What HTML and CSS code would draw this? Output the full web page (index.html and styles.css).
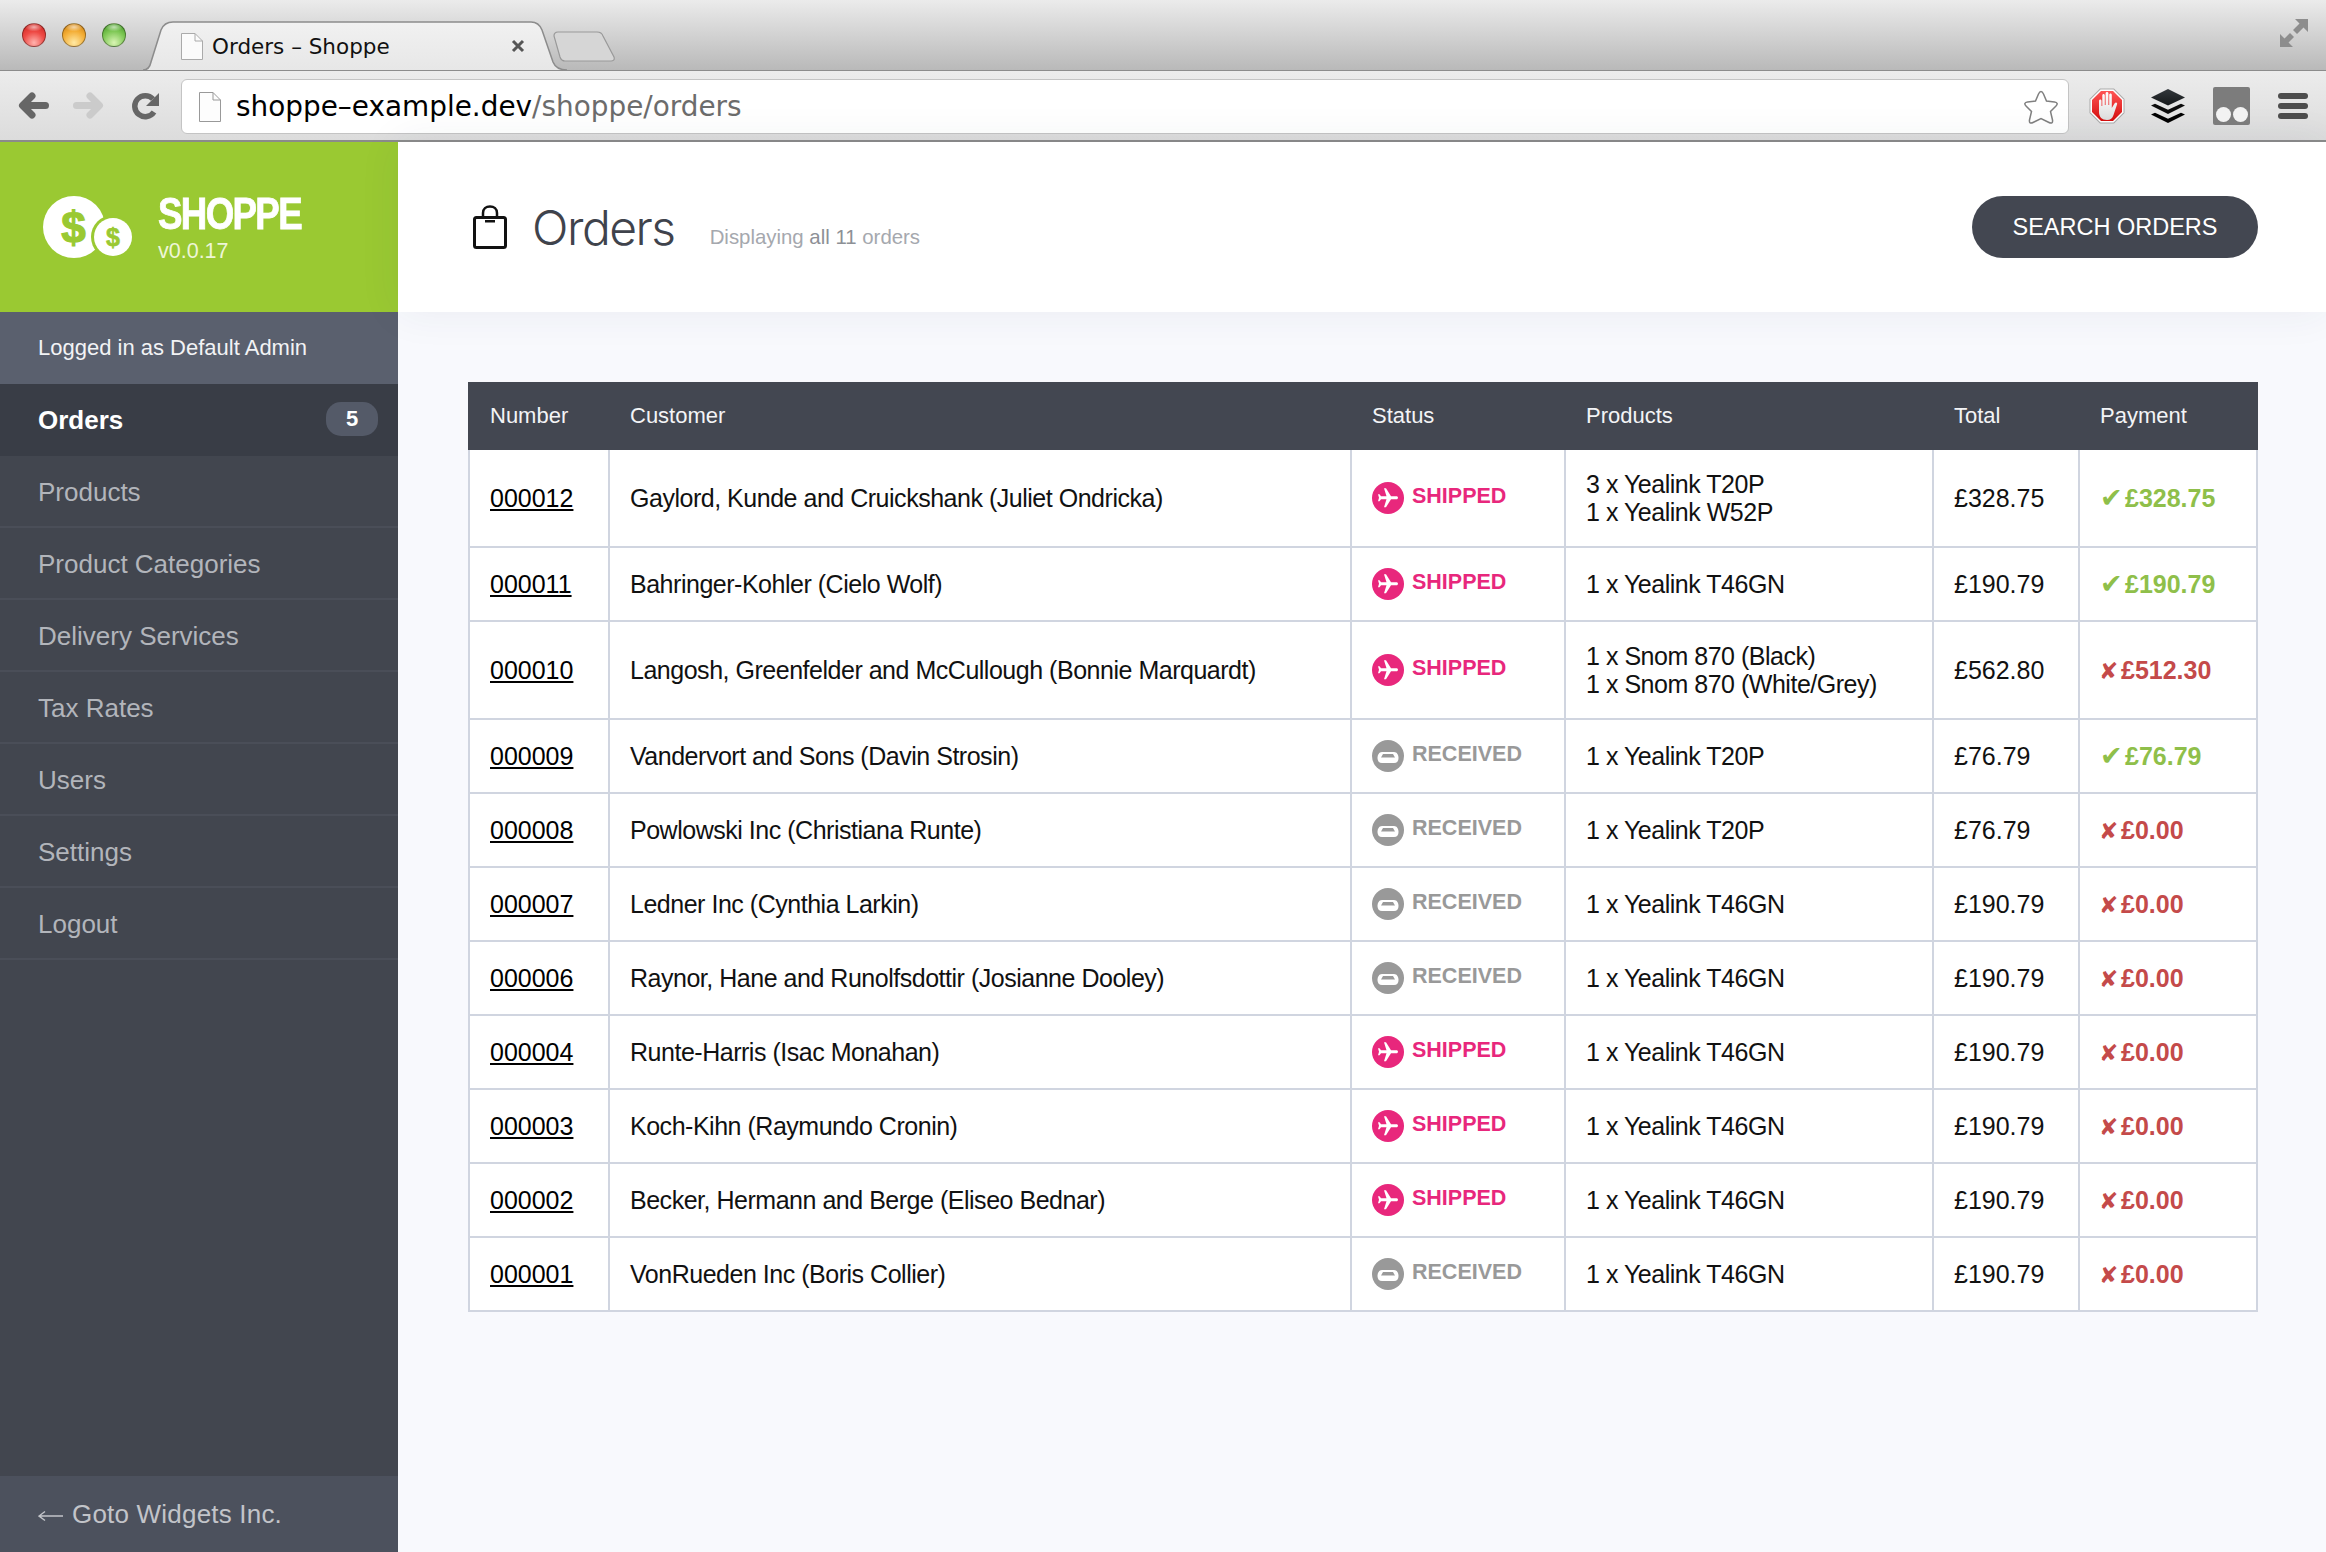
FILE: index.html
```html
<!DOCTYPE html>
<html lang="en">
<head>
    <meta charset="UTF-8">
    <title>Orders - Shoppe</title>
    <link rel="stylesheet" href="styles.css">
</head>
<body>
    <div class="browser">
        <div class="tabstrip">
            <div class="lights">
                <span class="light light-red"></span>
                <span class="light light-amber"></span>
                <span class="light light-green"></span>
            </div>
            <div class="tab">
                <svg class="tab-shape" viewBox="0 0 424 50">
                    <defs>
                        <linearGradient id="tabFill" x1="0" y1="0" x2="0" y2="1">
                            <stop offset="0" stop-color="#f1f1f1"/>
                            <stop offset="1" stop-color="#e7e7e7"/>
                        </linearGradient>
                    </defs>
                    <path d="M0 49C5 49 7 46 8 41L18 9C20 4 23 1 30 1L388 1C394 1 397 4 399 9L410 41C412 46 416 49 424 49" fill="url(#tabFill)" stroke="#8c8c8c" stroke-width="1.5"/>
                </svg>
                <svg class="tab-doc" viewBox="0 0 22 27">
                    <path d="M.5.5H14L21.5 8V26.5H.5Z" fill="#fbfbfb" stroke="#aaa"/>
                    <path d="M14 .5V8H21.5" fill="none" stroke="#aaa"/>
                </svg>
                <span class="tab-title">Orders – Shoppe</span>
                <svg class="tab-close" viewBox="0 0 14 14">
                    <path d="M2 2L12 12M12 2L2 12" stroke="#555" stroke-width="3"/>
                </svg>
            </div>
            <svg class="new-tab" viewBox="0 0 62 31">
                <path d="M1 5C1 2 3 1 5 1H44C47 1 49 2 50 5L61 26C62 29 60 30 58 30H12C9 30 8 29 7 26Z" fill="#d6d6d6" stroke="#999" stroke-width="1.2"/>
            </svg>
            <svg class="fullscreen" viewBox="0 0 28 28">
                <path d="M28 0V13L23.500 8.500L17 15L13 11L19.500 4.500L15 0Z" fill="#8d8d8d"/>
                <path d="M0 28V15L4.500 19.500L10 14L14 18L8.500 23.500L13 28Z" fill="#8d8d8d"/>
            </svg>
        </div>
        <div class="toolbar">
            <svg class="nav-back" viewBox="0 0 31 27"><path d="M27.500 13.500H5M14 4L4.500 13.500L14 23" fill="none" stroke="#666" stroke-width="7" stroke-linecap="round" stroke-linejoin="round"/></svg>
            <svg class="nav-forward" viewBox="0 0 31 27"><path d="M3.500 13.500H26M17 4L26.500 13.500L17 23" fill="none" stroke="#cbcbcb" stroke-width="7" stroke-linecap="round" stroke-linejoin="round"/></svg>
            <svg class="nav-reload" viewBox="0 0 28 28">
                <path d="M22 20A10.500 10.500 0 1 1 21 7" fill="none" stroke="#666" stroke-width="5.500"/>
                <path d="M27 1V14H14Z" fill="#666"/>
            </svg>
            <div class="address">
                <svg class="address-doc" viewBox="0 0 22 30">
                    <path d="M.5.5H14L21.500 8V29.500H.5Z" fill="#fdfdfd" stroke="#999"/>
                    <path d="M14 .5V8H21.500" fill="none" stroke="#999"/>
                </svg>
                <span class="address-text">shoppe–example.dev<span class="address-path">/shoppe/orders</span></span>
                <svg class="address-star" viewBox="0 0 36 36">
                    <path d="M18 2.500C19 2.500 19.800 3.500 20.500 5L23.500 12L31.500 13C34.500 13.400 35 15 33 17L27.500 22.500L29.500 31C30 33.800 28.500 34.800 26 33.500L18 29.500L10 33.500C7.500 34.800 6 33.800 6.500 31L8.500 22.500L3 17C1 15 1.500 13.400 4.500 13L12.500 12L15.500 5C16.200 3.500 17 2.500 18 2.500Z" fill="#fff" stroke="#808080" stroke-width="1.500"/>
                </svg>
            </div>
            <svg class="ext-stop" viewBox="0 0 36 36">
                <defs>
                    <linearGradient id="stopRed" x1="0" y1="0" x2="0" y2="1">
                        <stop offset="0" stop-color="#f55"/>
                        <stop offset="1" stop-color="#d40d0d"/>
                    </linearGradient>
                    <linearGradient id="stopHand" x1="0" y1="0" x2="0" y2="1">
                        <stop offset="0" stop-color="#fff"/>
                        <stop offset="1" stop-color="#ddd"/>
                    </linearGradient>
                </defs>
                <path d="M11 .5H25L35.500 11V25L25 35.500H11L.5 25V11Z" fill="#aaa"/>
                <path d="M11.500 1.500H24.500L34.500 11.500V24.500L24.500 34.500H11.500L1.500 24.500V11.500Z" fill="#fff"/>
                <path d="M12 3H24L33 12V24L24 33H12L3 24V12Z" fill="url(#stopRed)"/>
                <path d="M10 13C10 11 12.500 11 12.500 13V18H13.300V7.500C13.300 5.500 15.800 5.500 15.800 7.500V17H16.600V5.500C16.600 3.500 19.400 3.500 19.400 5.500V17H20.200V7C20.200 5 22.800 5 22.800 7V20L25.500 15.500C26.800 13.500 28.800 14.800 28 16.500L24.500 27C23.500 30.500 21.500 32 18 32C13 32 10 29 10 24Z" fill="url(#stopHand)"/>
            </svg>
            <svg class="ext-layers" viewBox="0 0 34 34">
                <defs>
                    <linearGradient id="layerTop" x1="0" y1="0" x2="0" y2="1">
                        <stop offset="0" stop-color="#33383c"/>
                        <stop offset="1" stop-color="#15181a"/>
                    </linearGradient>
                </defs>
                <path d="M17 0L34 8.500L17 16.500L0 8.500Z" fill="url(#layerTop)"/>
                <path d="M0 16.500L4 14.700L17 20.800L30 14.700L34 16.500L17 25Z" fill="#0c0c0c"/>
                <path d="M0 25.500L4 23.700L17 29.800L30 23.700L34 25.500L17 34Z" fill="#000"/>
            </svg>
            <div class="ext-box">
                <span class="ext-box-dot"></span>
                <span class="ext-box-dot"></span>
            </div>
            <div class="ext-menu">
                <span class="ext-menu-bar"></span>
                <span class="ext-menu-bar"></span>
                <span class="ext-menu-bar"></span>
            </div>
        </div>
    </div>

    <div class="app">
        <aside class="sidebar">
            <div class="brand">
                <svg class="brand-logo" viewBox="0 0 92 62">
                    <circle cx="31" cy="31" r="31" fill="#fff"/>
                    <circle cx="70" cy="41" r="22" fill="#9ac932"/>
                    <circle cx="70" cy="41" r="19" fill="#fff"/>
                    <text class="logo-dollar-big" x="30.500" y="47" text-anchor="middle">$</text>
                    <text class="logo-dollar-small" x="70" y="50" text-anchor="middle">$</text>
                </svg>
                <div class="brand-text">
                    <div class="brand-name">SHOPPE</div>
                    <div class="brand-version">v0.0.17</div>
                </div>
            </div>
            <div class="logged-in">Logged in as Default Admin</div>
            <nav class="nav">
                <a class="nav-item nav-item-active">Orders <span class="nav-badge">5</span></a>
                <a class="nav-item">Products</a>
                <a class="nav-item">Product Categories</a>
                <a class="nav-item">Delivery Services</a>
                <a class="nav-item">Tax Rates</a>
                <a class="nav-item">Users</a>
                <a class="nav-item">Settings</a>
                <a class="nav-item">Logout</a>
            </nav>
            <div class="goto">
                <svg class="goto-arrow" viewBox="0 0 25 12"><path d="M25 6H2M7 1.500L1 6L7 10.500" fill="none" stroke="#c2c4c9" stroke-width="1.400"/></svg>
                Goto Widgets Inc.
            </div>
        </aside>

        <main class="main">
            <header class="page-head">
                <svg class="bag-icon" viewBox="0 0 34 44">
                    <rect x="1.500" y="12.500" width="31" height="30" rx="2" fill="none" stroke="#111" stroke-width="3"/>
                    <path d="M10 12V8C10 4 13 1.500 17 1.500C21 1.500 24 4 24 8V12" fill="none" stroke="#111" stroke-width="2.500"/>
                    <rect x="12" y="15" width="10" height="2.500" fill="#111"/>
                </svg>
                <h1 class="page-title">Orders</h1>
                <p class="page-sub">Displaying <b class="page-sub-em">all 11</b> orders</p>
                <a class="search-btn">SEARCH ORDERS</a>
            </header>

            <section class="content">
                <table class="orders">
                    <colgroup>
                        <col class="col-number">
                        <col class="col-customer">
                        <col class="col-status">
                        <col class="col-products">
                        <col class="col-total">
                        <col class="col-payment">
                    </colgroup>
                    <thead>
                        <tr><th>Number</th><th>Customer</th><th>Status</th><th>Products</th><th>Total</th><th>Payment</th></tr>
                    </thead>
                    <tbody id="rows"></tbody>
                </table>
            </section>
        </main>
    </div>

    <script src="orders.js"></script>
</body>
</html>
```

FILE: orders.js
```js
const orders = [
    ['000012', 'Gaylord, Kunde and Cruickshank (Juliet Ondricka)', 's', ['3 x Yealink T20P', '1 x Yealink W52P'], '£328.75', '£328.75', true],
    ['000011', 'Bahringer-Kohler (Cielo Wolf)', 's', ['1 x Yealink T46GN'], '£190.79', '£190.79', true],
    ['000010', 'Langosh, Greenfelder and McCullough (Bonnie Marquardt)', 's', ['1 x Snom 870 (Black)', '1 x Snom 870 (White/Grey)'], '£562.80', '£512.30', false],
    ['000009', 'Vandervort and Sons (Davin Strosin)', 'r', ['1 x Yealink T20P'], '£76.79', '£76.79', true],
    ['000008', 'Powlowski Inc (Christiana Runte)', 'r', ['1 x Yealink T20P'], '£76.79', '£0.00', false],
    ['000007', 'Ledner Inc (Cynthia Larkin)', 'r', ['1 x Yealink T46GN'], '£190.79', '£0.00', false],
    ['000006', 'Raynor, Hane and Runolfsdottir (Josianne Dooley)', 'r', ['1 x Yealink T46GN'], '£190.79', '£0.00', false],
    ['000004', 'Runte-Harris (Isac Monahan)', 's', ['1 x Yealink T46GN'], '£190.79', '£0.00', false],
    ['000003', 'Koch-Kihn (Raymundo Cronin)', 's', ['1 x Yealink T46GN'], '£190.79', '£0.00', false],
    ['000002', 'Becker, Hermann and Berge (Eliseo Bednar)', 's', ['1 x Yealink T46GN'], '£190.79', '£0.00', false],
    ['000001', 'VonRueden Inc (Boris Collier)', 'r', ['1 x Yealink T46GN'], '£190.79', '£0.00', false]
];

const planeIcon = '<svg class="status-icon" viewBox="0 0 32 32"><circle cx="16" cy="16" r="16" fill="currentColor"/>' +
    '<g transform="rotate(90 16 16) translate(4.200 4)"><path fill="#fff" d="M21 16v-2l-8-5V3.500c0-.83-.67-1.500-1.500-1.500S10 2.670 10 3.500V9l-8 5v2l8-2.500V19l-2 1.500V22l3.500-1 3.500 1v-1.500L13 19v-5.500l8 2.500z"/></g></svg>';
const trayIcon = '<svg class="status-icon" viewBox="0 0 32 32"><circle cx="16" cy="16" r="16" fill="currentColor"/>' +
    '<path fill="#fff" d="M10 12H22C25 12 26.500 15 26.500 18C26.500 21 25 23 22 23H10C7 23 5.500 21 5.500 18C5.500 15 7 12 10 12Z"/>' +
    '<path fill="currentColor" d="M11 14H21L23 17.500H9Z"/></svg>';

const rowsHtml = orders.map(function(o) {
    const shipped = o[2] === 's';
    return '<tr>' +
        '<td><a class="order-link">' + o[0] + '</a></td>' +
        '<td class="cell-tight">' + o[1] + '</td>' +
        '<td><span class="status ' + (shipped ? 'status-shipped' : 'status-received') + '">' +
            (shipped ? planeIcon : trayIcon) + '<span class="status-label">' + (shipped ? 'SHIPPED' : 'RECEIVED') + '</span></span></td>' +
        '<td class="cell-tight">' + o[3].join('<br>') + '</td>' +
        '<td>' + o[4] + '</td>' +
        '<td class="' + (o[6] ? 'paid' : 'unpaid') + '"><span class="pay-mark">' + (o[6] ? '✔' : '✘') + '</span>' + o[5] + '</td>' +
        '</tr>';
}).join('');

document.getElementById('rows').innerHTML = rowsHtml;
```

FILE: styles.css
```css
* {
    margin: 0;
    padding: 0;
    box-sizing: border-box;
}

html, body {
    height: 100%;
}

body {
    display: flex;
    flex-direction: column;
    overflow: hidden;
    font-family: "Liberation Sans", Arial, sans-serif;
    color: #111;
    background: #f8f9fd;
}

svg {
    display: block;
    flex: none;
}

/* browser chrome */
.browser {
    flex: none;
}

.tabstrip {
    height: 71px;
    display: flex;
    align-items: center;
    padding-left: 22px;
    padding-right: 18px;
    background: linear-gradient(#ebebeb, #b9b9b9);
    border-bottom: 1px solid #8c8c8c;
}

.lights {
    display: flex;
    gap: 16px;
}

.light {
    width: 24px;
    height: 24px;
    border-radius: 50%;
    border: 1px solid rgba(0, 0, 0, 0.35);
}

.light-red {
    background: radial-gradient(ellipse 40% 20% at 50% 14%, rgba(255, 255, 255, 0.6), transparent), radial-gradient(circle at 50% 85%, #ffb3ae 0%, #ee4a45 50%, #c8201c 100%);
}

.light-amber {
    background: radial-gradient(ellipse 40% 20% at 50% 14%, rgba(255, 255, 255, 0.6), transparent), radial-gradient(circle at 50% 85%, #ffe9a4 0%, #f3ac33 55%, #c57a12 100%);
}

.light-green {
    background: radial-gradient(ellipse 40% 20% at 50% 14%, rgba(255, 255, 255, 0.6), transparent), radial-gradient(circle at 50% 85%, #d9f5b4 0%, #7bc652 55%, #3f9124 100%);
}

.tab {
    position: relative;
    align-self: flex-end;
    display: flex;
    align-items: center;
    width: 424px;
    height: 50px;
    margin-left: 17px;
    margin-bottom: -1px;
    padding-left: 38px;
}

.tab-shape {
    position: absolute;
    top: 0;
    left: 0;
    width: 424px;
    height: 50px;
}

.tab-doc {
    position: relative;
    width: 22px;
    height: 27px;
}

.tab-title {
    position: relative;
    margin-left: 9px;
    font-family: "DejaVu Sans", sans-serif;
    font-size: 21.500px;
    color: #111;
}

.tab-close {
    position: relative;
    width: 14px;
    height: 14px;
    margin-left: auto;
    margin-right: 42px;
}

.new-tab {
    width: 62px;
    height: 31px;
    margin-left: -14px;
    margin-top: 23px;
}

.fullscreen {
    width: 28px;
    height: 28px;
    margin-left: auto;
    margin-top: -4px;
}

.toolbar {
    height: 71px;
    display: flex;
    align-items: center;
    padding-left: 18px;
    padding-right: 18px;
    background: linear-gradient(#ececec, #dcdcdc);
    border-bottom: 2px solid #8b8b8b;
}

.nav-back,
.nav-forward {
    width: 31px;
    height: 27px;
}

.nav-forward {
    margin-left: 24px;
}

.nav-reload {
    width: 28px;
    height: 28px;
    margin-left: 28px;
}

.address {
    flex: 1;
    height: 55px;
    display: flex;
    align-items: center;
    margin-left: 21px;
    margin-top: 2px;
    padding-left: 17px;
    padding-right: 9px;
    background: #fff;
    border: 1px solid #c4c4c4;
    border-radius: 6px;
}

.address-doc {
    width: 22px;
    height: 30px;
}

.address-text {
    margin-left: 15px;
    font-family: "DejaVu Sans", sans-serif;
    font-size: 27.900px;
    color: #000;
}

.address-path {
    color: #6c6c6c;
}

.address-star {
    width: 36px;
    height: 36px;
    margin-left: auto;
}

.ext-stop {
    width: 36px;
    height: 36px;
    margin-left: 20px;
}

.ext-layers {
    width: 34px;
    height: 34px;
    margin-left: 26px;
}

.ext-box {
    display: flex;
    align-items: flex-end;
    justify-content: center;
    gap: 2px;
    width: 37px;
    height: 38px;
    margin-left: 28px;
    padding-bottom: 3px;
    background: #7c7c7c;
    border-radius: 2px;
    filter: blur(0.6px);
}

.ext-box-dot {
    width: 15px;
    height: 15px;
    border-radius: 50%;
    background: #f2f2f2;
}

.ext-menu {
    display: flex;
    flex-direction: column;
    gap: 4px;
    margin-left: 28px;
}

.ext-menu-bar {
    width: 30px;
    height: 6px;
    border-radius: 3px;
    background: #4d4d4d;
}

/* app */
.app {
    flex: 1;
    display: flex;
    min-height: 0;
}

.sidebar {
    flex: none;
    width: 398px;
    display: flex;
    flex-direction: column;
    background: #42464f;
}

.brand {
    height: 170px;
    display: flex;
    align-items: center;
    padding-left: 43px;
    background: #9ac932;
}

.brand-logo {
    width: 92px;
    height: 62px;
    margin-top: -1px;
}

.logo-dollar-big,
.logo-dollar-small {
    font-family: "Liberation Sans", Arial, sans-serif;
    font-weight: 700;
    fill: #9ac932;
    stroke: #9ac932;
}

.logo-dollar-big {
    font-size: 44px;
    stroke-width: 1.200px;
}

.logo-dollar-small {
    font-size: 25px;
    stroke-width: 0.6px;
}

.brand-text {
    margin-left: 23px;
    margin-top: 3px;
    color: #fff;
}

.brand-name {
    font-size: 44px;
    line-height: 40px;
    font-weight: 700;
    letter-spacing: -2px;
    -webkit-text-stroke: 0.8px #fff;
    transform: scaleX(0.834);
    transform-origin: left center;
}

.brand-version {
    margin-top: 4px;
    font-size: 21.500px;
    line-height: 26px;
    color: #eef6d8;
}

.logged-in {
    height: 72px;
    display: flex;
    align-items: center;
    padding-left: 38px;
    font-size: 22px;
    color: #f2f3f5;
    background: #5a606e;
}

.nav {
    flex: 1;
}

.nav-item {
    height: 72px;
    display: flex;
    align-items: center;
    justify-content: space-between;
    padding-top: 3px;
    padding-left: 38px;
    padding-right: 20px;
    font-size: 26px;
    color: #b2b5bb;
    border-bottom: 2px solid #4a4e58;
}

.nav-item-active {
    font-weight: 700;
    color: #fff;
    background: #393d46;
    border-bottom-color: #393d46;
}

.nav-badge {
    width: 52px;
    height: 34px;
    display: flex;
    align-items: center;
    justify-content: center;
    margin-top: -3px;
    font-size: 22px;
    border-radius: 15px;
    background: #545a68;
}

.goto {
    flex: none;
    height: 76px;
    display: flex;
    align-items: center;
    gap: 9px;
    padding-left: 38px;
    font-size: 26px;
    letter-spacing: 0.2px;
    color: #c2c4c9;
    background: #4c515d;
}

.goto-arrow {
    width: 25px;
    height: 12px;
    margin-top: 3px;
}

.main {
    flex: 1;
    min-width: 0;
}

.page-head {
    height: 170px;
    display: flex;
    align-items: center;
    padding-left: 75px;
    padding-right: 68px;
    background: #fff;
    box-shadow: 0 0 40px rgba(40, 50, 80, 0.07);
}

.bag-icon {
    width: 34px;
    height: 44px;
}

.page-title {
    margin-left: 25px;
    font-family: Inter, sans-serif;
    font-size: 48px;
    font-weight: 300;
    letter-spacing: -1.500px;
    color: #3f434c;
}

.page-sub {
    margin-left: 35px;
    margin-top: 20px;
    font-size: 20.400px;
    color: #a5a8ae;
}

.page-sub-em {
    font-weight: 400;
    color: #8d9096;
}

.search-btn {
    width: 286px;
    height: 62px;
    display: flex;
    align-items: center;
    justify-content: center;
    margin-left: auto;
    font-size: 23.500px;
    color: #fff;
    background: #434751;
    border-radius: 31px;
}

.content {
    padding: 70px 68px 0 70px;
}

.orders {
    width: 1790px;
    table-layout: fixed;
    border-collapse: separate;
    border-spacing: 0;
    background: #fff;
}

.col-number { width: 142px; }
.col-customer { width: 742px; }
.col-status { width: 214px; }
.col-products { width: 368px; }
.col-total { width: 146px; }
.col-payment { width: 178px; }

.orders th {
    height: 68px;
    padding-left: 20px;
    text-align: left;
    font-size: 22px;
    font-weight: 400;
    color: #f3f4f6;
    background: #434751;
}

.orders th:first-child {
    padding-left: 22px;
}

.orders td {
    padding: 20px 10px 20px 20px;
    font-size: 25px;
    line-height: 28px;
    color: #111;
    border-right: 2px solid #d0d5e0;
    border-bottom: 2px solid #d0d5e0;
}

.orders td:first-child {
    border-left: 2px solid #d0d5e0;
}

.orders .cell-tight {
    letter-spacing: -0.48px;
}

.order-link {
    color: #000;
    text-decoration: underline;
}

.status {
    display: flex;
    align-items: center;
    gap: 8px;
    font-weight: 700;
}

.status-icon {
    width: 32px;
    height: 32px;
}

.status-label {
    margin-top: -4px;
    font-size: 21.500px;
}

.status-shipped {
    color: #e8277c;
}

.status-received {
    color: #999;
}

.paid,
.unpaid {
    font-weight: 700;
}

.orders .paid {
    color: #8fbf4a;
}

.orders .unpaid {
    color: #c44a4a;
}

.pay-mark {
    display: inline-block;
    font-family: "DejaVu Sans", sans-serif;
    font-weight: 400;
}

.paid .pay-mark {
    width: 25px;
    font-size: 27px;
    line-height: 0;
}

.unpaid .pay-mark {
    width: 21px;
    margin-left: -1px;
    margin-right: 1px;
    font-size: 23px;
    line-height: 0;
}
```
